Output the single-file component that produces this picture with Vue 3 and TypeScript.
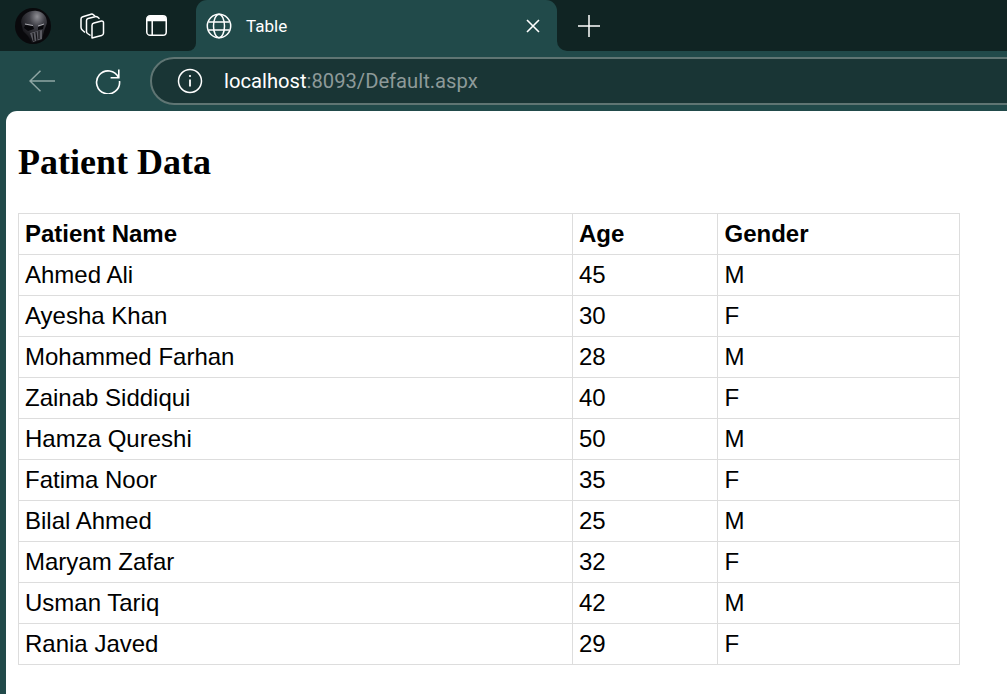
<script setup lang="ts">
interface Patient { name: string; age: number; gender: string }
const patients: Patient[] = [
  { name: 'Ahmed Ali', age: 45, gender: 'M' },
  { name: 'Ayesha Khan', age: 30, gender: 'F' },
  { name: 'Mohammed Farhan', age: 28, gender: 'M' },
  { name: 'Zainab Siddiqui', age: 40, gender: 'F' },
  { name: 'Hamza Qureshi', age: 50, gender: 'M' },
  { name: 'Fatima Noor', age: 35, gender: 'F' },
  { name: 'Bilal Ahmed', age: 25, gender: 'M' },
  { name: 'Maryam Zafar', age: 32, gender: 'F' },
  { name: 'Usman Tariq', age: 42, gender: 'M' },
  { name: 'Rania Javed', age: 29, gender: 'F' },
]
</script>

<template>
  <div class="browser">
    <header class="tabbar">
      <div class="dark-left">
        <svg class="avatar" width="36" height="36" viewBox="0 0 36 36">
          <defs>
            <radialGradient id="skull" cx="62%" cy="18%" r="75%">
              <stop offset="0" stop-color="#8f8f95" />
              <stop offset="0.4" stop-color="#3f3f46" />
              <stop offset="1" stop-color="#121216" />
            </radialGradient>
          </defs>
          <circle cx="18" cy="18" r="18" fill="#09090c" />
          <path d="M6 14C7 6 14 2 22 3c7 1 10 6 10 12l-3 8-2 9-10 3-4-7-5-5z" fill="url(#skull)" />
          <path d="M10 17l8 1 1 3-6 2-4-3zM23 19l6-2-1 4-5 1z" fill="#08080b" />
          <path d="M10 16l8 1.500M23 18l6-2" stroke="#a8a8ae" stroke-width="1" fill="none" />
          <path d="M15 25l12-3 0 9-9 3z" fill="#5b5b62" />
          <path d="M18 25l1 8M21 24l1 9M24 23l0 8" stroke="#141418" stroke-width="1.200" />
        </svg>
        <svg class="ic-collections" width="26" height="26" viewBox="0 0 26 26" fill="none" stroke="#fff" stroke-width="1.500" stroke-linejoin="round">
          <path d="M12 25l9.500-2.500c1-.3 2-1 2-2.200V9.500c0-1-1-1.700-2-1.500l-7.500 2c-1 .3-2 1-2 2.200z" />
          <path d="M10.500 22.500L7.500 20.500c-.7-.5-1-1-1-2V7.500c0-1 .6-1.700 1.500-2L15 3.700c1-.3 2 0 2.800.5l1.700 1.500" />
          <path d="M5 19.500L2.500 17.300C1.500 16.400 1 15.500 1 14.300V6c0-1.200.8-2 1.800-2.300L11 1.200c1-.3 1.800 0 2.500.6l1.500 1.200" />
        </svg>
        <svg class="ic-tabs" width="21" height="21" viewBox="0 0 22 22" fill="none">
          <rect x=".8" y=".8" width="20.400" height="20.400" rx="3.500" stroke="#fff" stroke-width="1.600" />
          <path d="M1 4.500C1 2 2 1 4.500 1h13C20 1 21 2 21 4.500V6.500H1z" fill="#fff" />
          <path d="M6.500 6v15" stroke="#fff" stroke-width="1.600" />
        </svg>
      </div>
      <div class="tab-shell">
        <div class="tab">
          <svg class="globe" width="26" height="26" viewBox="0 0 26 26" fill="none" stroke="#fff" stroke-width="1.500">
            <circle cx="13" cy="13" r="11.700" />
            <ellipse cx="13" cy="13" rx="5.500" ry="11.700" />
            <path d="M2.500 9h21M2.500 17h21" />
          </svg>
          <span class="tab-title">Table</span>
          <svg class="close" width="14" height="14" viewBox="0 0 14 14" stroke="#fff" stroke-width="1.600">
            <path d="M1 1l12 12M13 1L1 13" />
          </svg>
        </div>
      </div>
      <div class="dark-right">
        <svg width="22" height="22" viewBox="0 0 22 22" stroke="#fff" stroke-width="1.500">
          <path d="M11 0v22M0 11h22" />
        </svg>
      </div>
    </header>

    <nav class="toolbar">
      <svg class="back" width="26" height="22" viewBox="0 0 26 22" fill="none" stroke="#8fa6a4" stroke-width="1.500">
        <path d="M1 11h25M11.500 .8L1 11l10.500 10.200" />
      </svg>
      <svg class="reload" width="26" height="26" viewBox="0 0 26 26" fill="none" stroke="#fff" stroke-width="1.600">
        <path d="M23.500 9.500A11.500 11.500 0 1 0 24.500 13" />
        <path d="M23.800 1.500v8.200h-8.200" />
      </svg>
      <div class="address">
        <svg class="info" width="26" height="26" viewBox="0 0 26 26" fill="none" stroke="#fff" stroke-width="1.500">
          <circle cx="13" cy="13" r="11.500" />
          <path d="M13 11.500v7" stroke-width="1.800" />
          <circle cx="13" cy="8" r=".7" fill="#fff" stroke-width="1" />
        </svg>
        <span class="url"><span class="host">localhost</span>:8093/Default.aspx</span>
      </div>
    </nav>

    <main class="page">
      <h1>Patient Data</h1>
      <table>
        <colgroup>
          <col class="col-name" />
          <col class="col-age" />
          <col class="col-gender" />
        </colgroup>
        <thead>
          <tr>
            <th>Patient Name</th>
            <th>Age</th>
            <th>Gender</th>
          </tr>
        </thead>
        <tbody>
          <tr v-for="p in patients" :key="p.name">
            <td>{{ p.name }}</td>
            <td>{{ p.age }}</td>
            <td>{{ p.gender }}</td>
          </tr>
        </tbody>
      </table>
    </main>
  </div>
</template>

<style>
html, body { margin: 0; height: 100%; overflow: hidden; background: #214a4a; }
</style>

<style scoped>
.browser {
  width: 1007px;
  height: 694px;
  overflow: hidden;
  background: #214a4a;
  display: flex;
  flex-direction: column;
}
.tabbar { display: flex; height: 51px; flex: none; }
.dark-left {
  width: 196px;
  background: #102423;
  border-bottom-right-radius: 8px;
  display: flex;
  align-items: center;
  padding-left: 15px;
  box-sizing: border-box;
}
.ic-collections { margin-left: 29px; }
.ic-tabs { margin-left: 40px; }
.tab-shell { width: 361px; background: #102423; }
.tab {
  height: 100%;
  background: #214a4a;
  border-radius: 11px 11px 0 0;
  display: flex;
  align-items: center;
  padding-left: 10px;
}
.tab-title {
  margin-left: 14px;
  color: #fff;
  font: 17px Roboto, "Noto Sans", sans-serif;
  flex: 1;
}
.close { margin-right: 17px; }
.dark-right {
  flex: 1;
  background: #102423;
  border-bottom-left-radius: 10px;
  display: flex;
  align-items: center;
  padding-left: 21px;
}
.toolbar {
  height: 60px;
  flex: none;
  display: flex;
  align-items: center;
  padding-left: 29px;
  box-sizing: border-box;
}
.reload { margin-left: 40px; }
.address {
  margin-left: 29px;
  flex: 1;
  height: 48px;
  margin-right: -40px;
  box-sizing: border-box;
  background: #193535;
  border: 2px solid #5f7573;
  border-radius: 24px;
  display: flex;
  align-items: center;
  padding-left: 25px;
}
.url {
  margin-left: 21px;
  font: 20.2px Roboto, "Noto Sans", sans-serif;
  color: #8d9a99;
  white-space: nowrap;
}
.host { color: #fff; }
.page {
  flex: 1;
  margin-left: 6px;
  background: #fff;
  border-top-left-radius: 11px;
  padding: 31px 0 0 12px;
  color: #000;
}
h1 {
  margin: 0 0 30px;
  font: bold 36px/41px "Liberation Serif", serif;
}
table {
  border-collapse: collapse;
  table-layout: fixed;
  width: 941px;
  font: 24px/28px "Liberation Sans", sans-serif;
}
.col-name { width: 554px; }
.col-age { width: 145px; }
.col-gender { width: 242px; }
th, td {
  border: 1px solid #ddd;
  height: 41px;
  padding: 0 6px;
  text-align: left;
  box-sizing: border-box;
}
th:nth-child(3), td:nth-child(3) { padding-left: 6.5px; }
th { font-weight: bold; }
</style>
